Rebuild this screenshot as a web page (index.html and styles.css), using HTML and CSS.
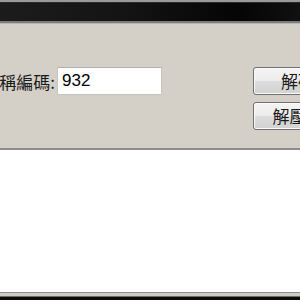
FILE: index.html
```html
<!DOCTYPE html>
<html>
<head>
<meta charset="utf-8">
<link rel="stylesheet" href="styles.css">
</head>
<body>
<div class="window">
  <div class="titlebar"></div>
  <div class="panel">
    <div class="field">
      <div class="label"><span>檔名稱編碼:</span></div>
      <div class="input">932</div>
    </div>
    <div class="buttons">
      <div class="btn">解碼</div>
      <div class="btn">解壓縮</div>
    </div>
  </div>
  <div class="content"></div>
  <div class="footer"></div>
</div>
</body>
</html>
```
FILE: styles.css
```css
html, body {
  margin: 0;
  padding: 0;
  width: 300px;
  height: 300px;
  overflow: hidden;
  background: #ffffff;
}
.window {
  width: 300px;
  height: 300px;
  display: flex;
  flex-direction: column;
  font-family: "Noto Sans CJK TC", "Liberation Sans", sans-serif;
}
.titlebar {
  height: 19px;
  flex: none;
  border-top: 2px solid #9a9a9a;
  border-bottom: 2px solid #7c7c7c;
  box-shadow: 0 1px 0 #b8b6b0;
  background: linear-gradient(90deg, #1c1c1c 0%, #141414 40%, #050505 80%, #101010 100%);
  position: relative;
}
.titlebar::before {
  content: "";
  position: absolute;
  left: 0; right: 0; top: 0;
  height: 1px;
  background: #2a2a2a;
}
.panel {
  flex: none;
  height: 81px;
  margin-top: 1px;
  padding-top: 43px;
  background: #d4d0c8;
  display: flex;
  align-items: flex-start;
  overflow: hidden;
  border-bottom: 2px solid #8c8c88;
}
.field {
  display: flex;
  align-items: center;
  height: 28px;
}
.label {
  width: 55px;
  margin-right: 2px;
  display: flex;
  justify-content: flex-end;
  overflow: hidden;
  white-space: nowrap;
  font-size: 17px;
  color: #1a1a1a;
}
.input {
  width: 99px;
  height: 26px;
  border: 1px solid #c4c4c0;
  border-top-color: #b0b0ac;
  background: #ffffff;
  font-family: "Liberation Sans", sans-serif;
  font-size: 17px;
  line-height: 26px;
  padding-left: 4px;
  color: #000;
}
.buttons {
  margin-left: 91px;
  display: flex;
  flex-direction: column;
  gap: 7px;
}
.btn {
  width: 88px;
  height: 26px;
  flex: none;
  border: 1px solid #707070;
  border-radius: 3px;
  background: linear-gradient(180deg, #f4f4f4 0%, #ececec 48%, #dcdcdc 52%, #d2d2d2 100%);
  box-shadow: inset 0 0 0 1px #fbfbfb;
  font-size: 17px;
  line-height: 26px;
  text-align: center;
  white-space: nowrap;
  color: #1a1a1a;
}
.content {
  flex: 1;
  background: #ffffff;
}
.footer {
  flex: none;
  height: 4px;
  border-top: 1px solid #8e8e8a;
  background: #cdcbc4;
  border-bottom: 3px solid #0a0a0a;
  box-shadow: inset 0 -1px 0 #6a6a6a;
}
```
